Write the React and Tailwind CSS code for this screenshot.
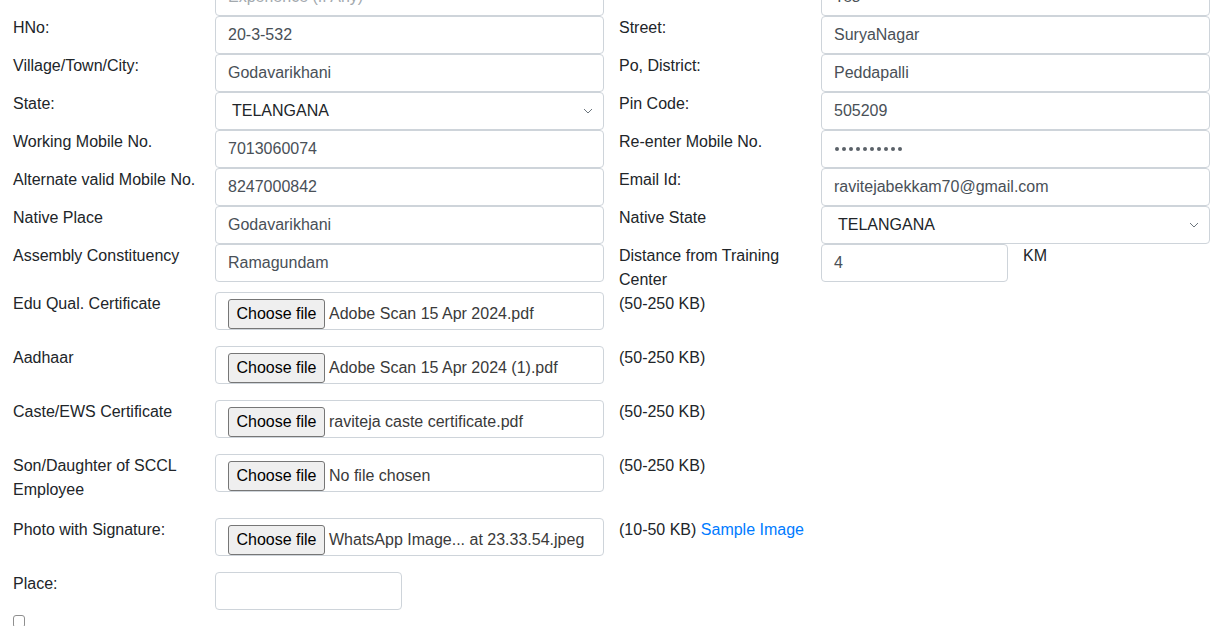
import React from "react";

const font = { fontFamily: '"Liberation Sans", Arial, sans-serif' };

function Label({ children, className = "" }) {
  return (
    <div className={`w-[190px] mr-[12px] shrink-0 text-[16px] leading-[24px] text-[#212529] ${className}`}>
      {children}
    </div>
  );
}

function TextBox({ value, placeholder, w = "w-[389px]", children }) {
  return (
    <div className={`${w} h-[38px] shrink-0 border border-[#ced4da] rounded-[4px] bg-white flex items-center px-[12px] text-[16px] text-[#495057]`}>
      {children ? children : value ? <span>{value}</span> : <span className="text-[#a3a9ae]">{placeholder}</span>}
    </div>
  );
}

function SelectBox({ value }) {
  return (
    <div className="w-[389px] h-[38px] shrink-0 border border-[#ced4da] rounded-[4px] bg-white flex items-center pl-[16px] pr-[10px] text-[16px] text-[#212529]">
      <span className="flex-1">{value}</span>
      <svg width="10" height="6" viewBox="0 0 10 6" fill="none">
        <path d="M1 1 L5 5 L9 1" stroke="#6c757d" strokeWidth="1" />
      </svg>
    </div>
  );
}

function FileBox({ name }) {
  return (
    <div className="w-[389px] h-[38px] shrink-0 border border-[#ced4da] rounded-[4px] bg-white flex items-start pt-[6px] px-[12px] text-[16px]">
      <div className="w-[97px] h-[30px] shrink-0 bg-[#efefef] border border-[#767676] rounded-[3px] flex items-center justify-center text-black">
        Choose file
      </div>
      <span className="ml-[4px] leading-[30px] text-[#3a3a3a] whitespace-nowrap">{name}</span>
    </div>
  );
}

function Row({ children, className = "" }) {
  return <div className={`flex items-start pl-[13px] ${className}`}>{children}</div>;
}

function Pair({ l1, i1, l2, i2 }) {
  return (
    <Row className="min-h-[38px]">
      <Label>{l1}</Label>
      {i1}
      <div className="w-[15px] shrink-0" />
      <Label>{l2}</Label>
      {i2}
    </Row>
  );
}

export default function App() {
  return (
    <div className="w-[1221px] h-[626px] overflow-hidden bg-white" style={font}>
      <div className="-mt-[22px]">
        <Pair
          l1=""
          i1={<TextBox placeholder="Experience (If Any)" />}
          l2=""
          i2={<TextBox value="Yes" />}
        />
        <Pair l1="HNo:" i1={<TextBox value="20-3-532" />} l2="Street:" i2={<TextBox value="SuryaNagar" />} />
        <Pair
          l1="Village/Town/City:"
          i1={<TextBox value="Godavarikhani" />}
          l2="Po, District:"
          i2={<TextBox value="Peddapalli" />}
        />
        <Pair l1="State:" i1={<SelectBox value="TELANGANA" />} l2="Pin Code:" i2={<TextBox value="505209" />} />
        <Pair
          l1="Working Mobile No."
          i1={<TextBox value="7013060074" />}
          l2="Re-enter Mobile No."
          i2={
            <TextBox>
              <div className="flex gap-[3px] pl-[1px]">
                {Array.from({ length: 10 }).map((_, i) => (
                  <span key={i} className="w-[4px] h-[4px] rounded-full bg-[#5a6168]" />
                ))}
              </div>
            </TextBox>
          }
        />
        <Pair
          l1="Alternate valid Mobile No."
          i1={<TextBox value="8247000842" />}
          l2="Email Id:"
          i2={<TextBox value="ravitejabekkam70@gmail.com" />}
        />
        <Pair
          l1="Native Place"
          i1={<TextBox value="Godavarikhani" />}
          l2="Native State"
          i2={<SelectBox value="TELANGANA" />}
        />
        <Pair
          l1="Assembly Constituency"
          i1={<TextBox value="Ramagundam" />}
          l2="Distance from Training Center"
          i2={
            <div className="flex items-start">
              <TextBox value="4" w="w-[187px]" />
              <span className="ml-[15px] text-[16px] leading-[24px] text-[#212529]">KM</span>
            </div>
          }
        />

        <Row className="mb-[16px]">
          <Label>Edu Qual. Certificate</Label>
          <FileBox name="Adobe Scan 15 Apr 2024.pdf" />
          <div className="w-[15px] shrink-0" />
          <Label>(50-250 KB)</Label>
        </Row>
        <Row className="mb-[16px]">
          <Label>Aadhaar</Label>
          <FileBox name="Adobe Scan 15 Apr 2024 (1).pdf" />
          <div className="w-[15px] shrink-0" />
          <Label>(50-250 KB)</Label>
        </Row>
        <Row className="mb-[16px]">
          <Label>Caste/EWS Certificate</Label>
          <FileBox name="raviteja caste certificate.pdf" />
          <div className="w-[15px] shrink-0" />
          <Label>(50-250 KB)</Label>
        </Row>
        <Row className="mb-[16px]">
          <Label>Son/Daughter of SCCL Employee</Label>
          <FileBox name="No file chosen" />
          <div className="w-[15px] shrink-0" />
          <Label>(50-250 KB)</Label>
        </Row>
        <Row className="mb-[16px]">
          <Label>Photo with Signature:</Label>
          <FileBox name="WhatsApp Image... at 23.33.54.jpeg" />
          <div className="w-[15px] shrink-0" />
          <div className="text-[16px] leading-[24px] text-[#212529] whitespace-nowrap">
            (10-50 KB) <span className="text-[#007bff]">Sample Image</span>
          </div>
        </Row>
        <Row>
          <Label>Place:</Label>
          <TextBox w="w-[187px]" placeholder="" />
        </Row>
        <div className="pl-[13px] pt-[5px]">
          <div className="w-[12px] h-[13px] border border-[#8f8f8f] rounded-[3px] bg-white" />
        </div>
      </div>
    </div>
  );
}
